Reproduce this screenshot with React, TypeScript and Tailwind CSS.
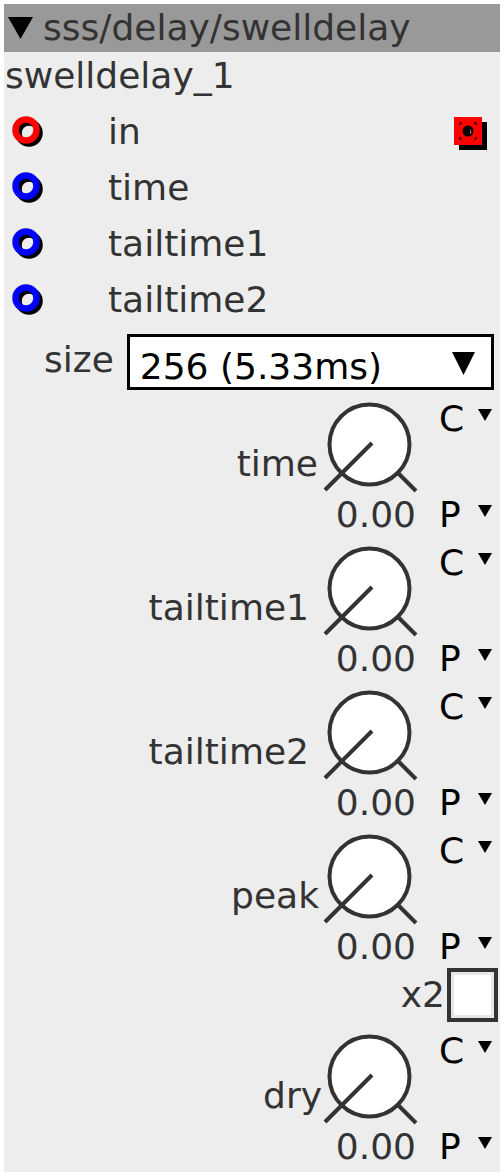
import React from 'react'

const font = "font-['DejaVu_Sans','Liberation_Sans',sans-serif]"

function Tri({ w, h, className }: { w: number; h: number; className?: string }) {
  return (
    <svg width={w} height={h} viewBox={`0 0 ${w} ${h}`} className={className}>
      <polygon points={`0,0 ${w},0 ${w / 2},${h}`} fill="#000" />
    </svg>
  )
}

function Inlet({ color }: { color: string }) {
  return (
    <svg width="36" height="36" viewBox="0 0 36 36" className="ml-[8px] mt-[4px] shrink-0">
      <circle cx="17" cy="17" r="10.5" stroke="#000" strokeWidth="6.5" fill="none" />
      <circle cx="14" cy="14" r="10.5" stroke={color} strokeWidth="6.5" fill="none" />
    </svg>
  )
}

function Outlet() {
  return (
    <svg width="34" height="34" viewBox="0 0 34 34" className="ml-auto mr-[12px] mt-[4px] shrink-0">
      <rect x="5" y="5" width="28" height="28" fill="#000" />
      <rect x="0" y="0" width="28" height="28" fill="#ff0000" />
      <circle cx="14" cy="14" r="5.5" fill="#000" />
      <path d="M16 12 A3.2 3.2 0 0 1 15.5 17.5 A5 5 0 0 0 16 12 Z" fill="#fff" />
      <path d="M6 8 V6 H8 M20 6 H22 V8 M22 20 V22 H20 M8 22 H6 V20" stroke="#000" strokeWidth="1.2" fill="none" />
    </svg>
  )
}

function KnobBlock({ label, pr, className }: { label: string; pr: string; className?: string }) {
  return (
    <div className={`flex h-[138px] ${className ?? ''}`}>
      <div className={`flex-1 pt-[46px] text-right text-[36px] leading-[40px] whitespace-nowrap ${pr}`}>{label}</div>
      <div className="ml-[2px] flex w-[98px] flex-col">
        <svg width="98" height="96" viewBox="0 0 98 96">
          <circle cx="47.5" cy="46.5" r="40" fill="#fff" stroke="#333" strokeWidth="4" />
          <line x1="50" y1="45" x2="3" y2="92" stroke="#333" strokeWidth="4" />
          <line x1="76" y1="75" x2="94" y2="93" stroke="#333" strokeWidth="4" />
        </svg>
        <div className="mt-[3px] pr-[4px] text-right text-[36px] leading-[36px] whitespace-nowrap">0.00</div>
      </div>
      <div className="ml-[19px] flex w-[61px] flex-col pt-[3px] text-[36px] leading-[36px] text-black">
        <div className="flex h-[36px] items-start">
          <span className="w-[39px]">C</span>
          <Tri w={14} h={12} className="mt-[8px]" />
        </div>
        <div className="mt-[60px] flex h-[36px] items-start">
          <span className="w-[39px]">P</span>
          <Tri w={14} h={12} className="mt-[8px]" />
        </div>
      </div>
    </div>
  )
}

export default function App() {
  return (
    <div className={`min-h-screen bg-white p-[4px] text-[#333] ${font}`}>
      <div className="w-[496px] bg-[#ededed] pb-[4px]">
        {/* Header */}
        <div className="flex h-[48px] items-center bg-[#999999] text-[36px] leading-[46px]">
          <Tri w={25} h={22} className="ml-[4px]" />
          <span className="ml-[10px]">sss/delay/swelldelay</span>
        </div>
        <div className="h-[52px] pl-[1px] text-[36px] leading-[48px]">swelldelay_1</div>

        {/* Inlets */}
        <div className="flex h-[56px] items-center text-[36px]">
          <Inlet color="#ff0000" />
          <span className="ml-[60px]">in</span>
          <Outlet />
        </div>
        {['time', 'tailtime1', 'tailtime2'].map(n => (
          <div key={n} className="flex h-[56px] items-center text-[36px]">
            <Inlet color="#0000ff" />
            <span className="ml-[60px]">{n}</span>
          </div>
        ))}

        {/* Size select */}
        <div className="flex h-[64px]">
          <span className="ml-[40px] mt-[12px] text-[36px] leading-[40px]">size</span>
          <div className="ml-[13px] mt-[6px] flex h-[56px] w-[367px] items-start border-[3px] border-black bg-white pl-[10px] pr-[16px] text-black">
            <span className="mt-[10px] text-[36px] leading-[40px]">256 (5.33ms)</span>
            <Tri w={23} h={23} className="ml-auto mt-[15px]" />
          </div>
        </div>

        {/* Knobs */}
        <KnobBlock label="time" pr="pr-[2px]" className="mt-[6px]" />
        <KnobBlock label="tailtime1" pr="pr-[11px]" className="mt-[6px]" />
        <KnobBlock label="tailtime2" pr="pr-[11px]" className="mt-[6px]" />
        <KnobBlock label="peak" pr="pr-[1px]" className="mt-[6px]" />

        <div className="flex h-[54px] items-center justify-end">
          <span className="text-[36px] leading-[40px]">x2</span>
          <div className="ml-[2px] mr-[2px] h-[54px] w-[51px] border-[4px] border-[#333] bg-white">
            <div className="h-full w-full border-[3px] border-[#e6e6e6] bg-white" />
          </div>
        </div>

        <KnobBlock label="dry" pr="mr-[-2px]" className="mt-[8px]" />
      </div>
    </div>
  )
}
